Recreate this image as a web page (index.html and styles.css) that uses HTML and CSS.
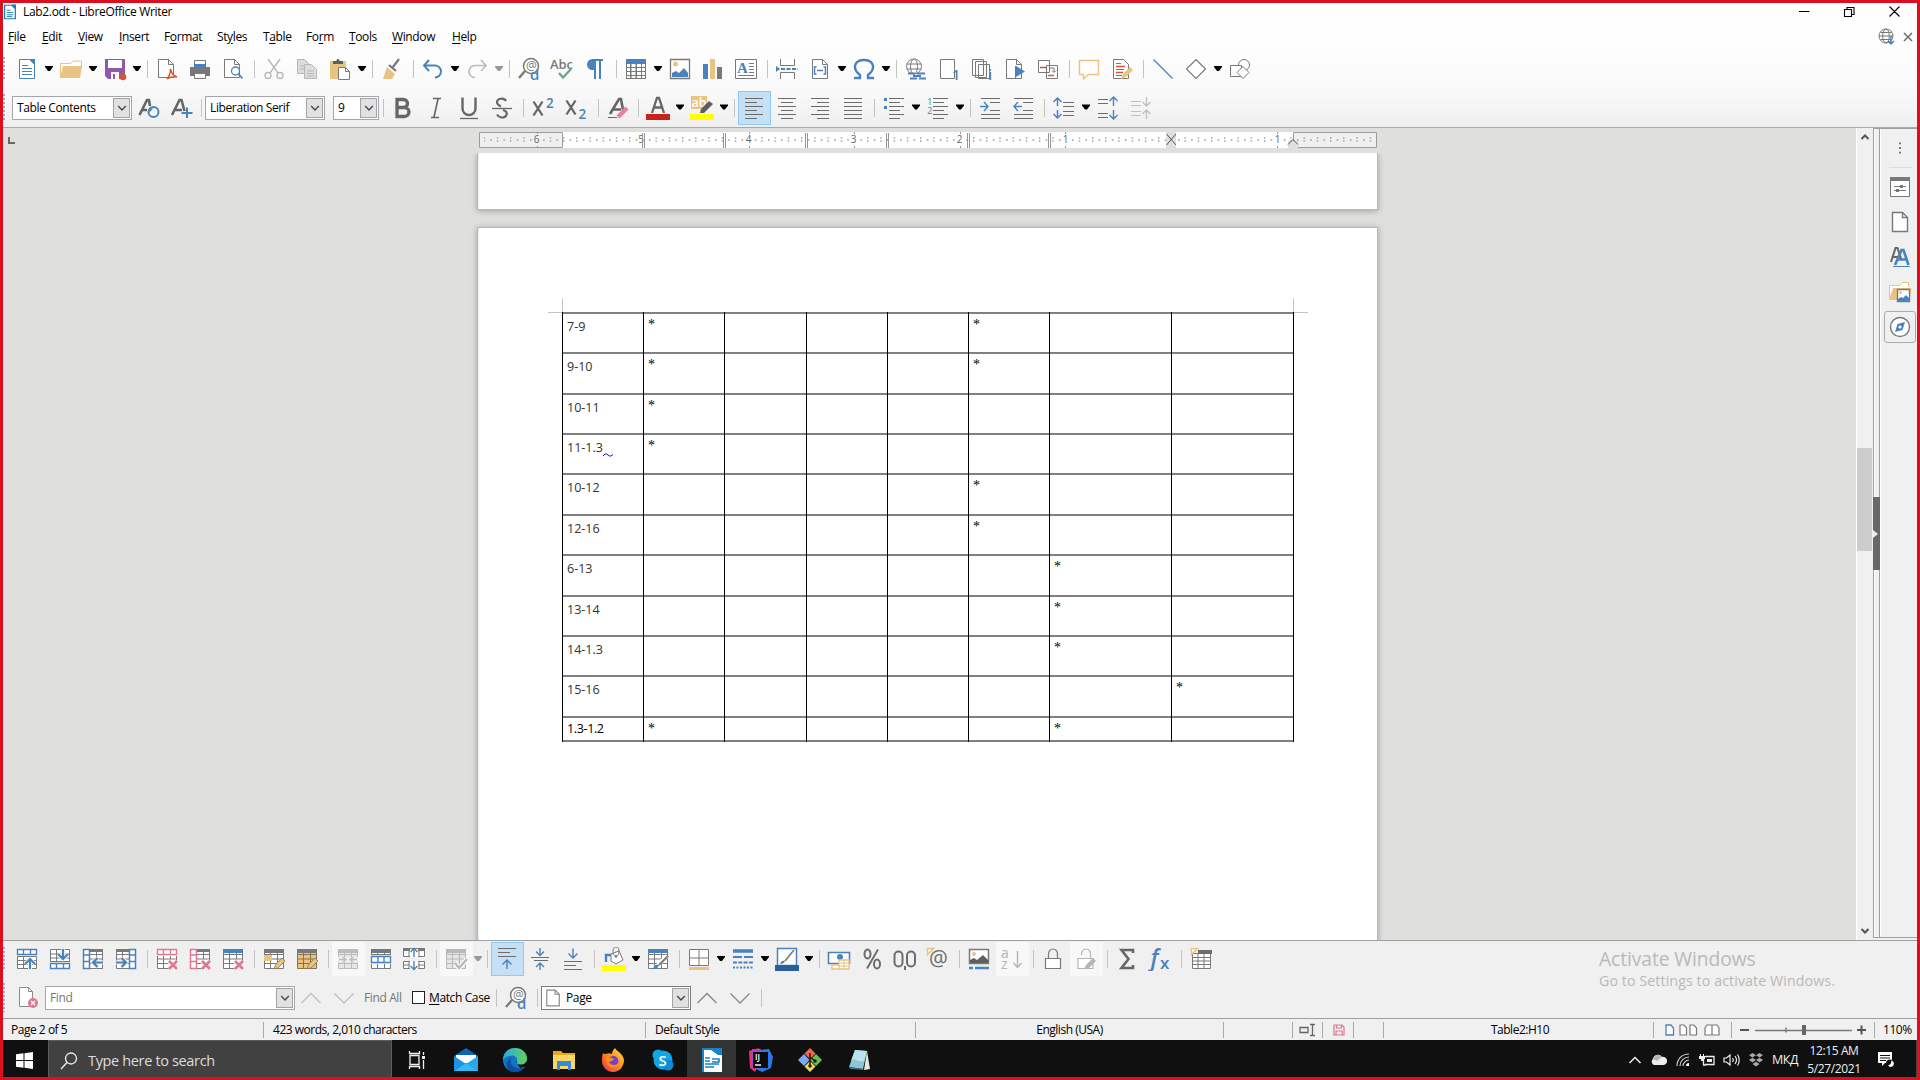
FILE: index.html
```html
<!DOCTYPE html>
<html lang="en">
<head>
<meta charset="utf-8">
<title>Lab2.odt - LibreOffice Writer</title>
<link rel="stylesheet" href="styles.css">
</head>
<body>
<svg class="defs" aria-hidden="true">
<symbol id="doc" viewBox="0 0 24 24"><path d="M4.500 2.500h10l5 5v14h-15z" fill="#fff" stroke="#4a82bd"/><path d="M14 2h6v6z" fill="#4a82bd"/><path d="M7 8.500h6M7 11.500h10M7 14.500h10M7 17.500h10" stroke="#4a82bd" fill="none"/></symbol>
<symbol id="open" viewBox="0 0 24 24"><path d="M1.500 20V6.500h10l3-2.500h8v5" fill="#fff" stroke="#eac282"/><path d="M4 9h19l-2 12H1z" fill="#eac282"/></symbol>
<symbol id="save" viewBox="0 0 24 24"><path d="M2 2h20v20H5l-3-3z" fill="#8e5aaf"/><path d="M5 3h14v8H5zM8 15h8v7H8z" fill="#fff"/><path d="M10 17h2v5h-2z" fill="#8e5aaf"/><circle cx="20" cy="20" r="3.300" fill="#d65532"/></symbol>
<symbol id="pdf" viewBox="0 0 24 24"><path d="M3.500 2.500h10l5 5v13h-15z" fill="#fff" stroke="#797979"/><path d="M13.500 2.500v5h5" fill="none" stroke="#797979"/><path d="M12 22c2.500-3 3.500-6 3.500-10 1 4 3 7 6.500 8-4-.5-7 0-10 2z" fill="#fff" stroke="#d65532" stroke-width="1.500"/></symbol>
<symbol id="print" viewBox="0 0 24 24"><path d="M6.500 9V3.500h11V9" fill="#fff" stroke="#797979"/><path d="M2 10h20v9H2z" fill="#797979"/><path d="M6 7h12v4H6z" fill="#4a82bd"/><path d="M6.500 16.500h11v5h-11z" fill="#fff" stroke="#797979"/></symbol>
<symbol id="preview" viewBox="0 0 24 24"><path d="M3.500 2.500h10l5 5v13h-15z" fill="#fff" stroke="#797979"/><path d="M13.500 2.500v5h5" fill="none" stroke="#797979"/><circle cx="14.500" cy="14" r="4" fill="#fff" stroke="#4a82bd" stroke-width="1.300"/><path d="M17.500 17l4 4.500" stroke="#4a82bd" stroke-width="1.800"/></symbol>
<symbol id="cut" viewBox="0 0 24 24"><g fill="none" stroke="#b9b9b9" stroke-width="1.400"><path d="M6 2l10 14M18 2L8 16"/><circle cx="6" cy="18.500" r="3"/><circle cx="18" cy="18.500" r="3"/></g></symbol>
<symbol id="copy" viewBox="0 0 24 24"><g fill="#ddd" stroke="#b5b5b5"><path d="M2.500 2.500h7l4 4v10h-11z"/><path d="M9.500 7.500h7l5 5v9h-12z"/><path d="M12 14h7M12 16.500h7M12 19h7M5 9h4M5 12h4"/></g></symbol>
<symbol id="paste" viewBox="0 0 24 24"><path d="M2 4h16v18H2z" fill="#eac282"/><path d="M5 4h3l2-2.500L12 4h3v3H5z" fill="#5f5f5f"/><path d="M10.500 10.500h7l4 4v8h-11z" fill="#fff" stroke="#797979"/><path d="M17.500 10.500v4h4" fill="none" stroke="#797979"/></symbol>
<symbol id="brush" viewBox="0 0 24 24"><path d="M7 10l8 7-3 5H3z" fill="#eac282"/><path d="M9 8l7 6M13 10l6-8" stroke="#797979" stroke-width="2.200"/></symbol>
<symbol id="undo" viewBox="0 0 24 24"><path d="M8 3L3 8.500 8 14M3 8.500h11a5.500 5.500 0 0 1 0 12" fill="none" stroke="#4a82bd" stroke-width="1.900"/></symbol>
<symbol id="redo" viewBox="0 0 24 24"><path d="M16 3l5 5.500-5 5.500M21 8.500H10a5.500 5.500 0 0 0 0 12" fill="none" stroke="#bcbcbc" stroke-width="1.700"/></symbol>
<symbol id="find" viewBox="0 0 24 24"><circle cx="14" cy="9" r="7.500" fill="#fff" stroke="#797979" stroke-width="1.500"/><path d="M8 14l-6 7" stroke="#797979" stroke-width="2.300"/><text x="9" y="12.500" class="g" font-size="12" fill="#797979">@</text><text x="13" y="22.500" class="gb" font-size="15" fill="#4a82bd">d</text></symbol>
<symbol id="spell" viewBox="0 0 24 24"><text x="0" y="11.500" class="gb" font-size="12.500" textLength="23" lengthAdjust="spacingAndGlyphs" fill="#797979">Abc</text><path d="M9 16l4 4.500 8-8.500" fill="none" stroke="#69a68c" stroke-width="2.300"/></symbol>
<symbol id="pilcrow" viewBox="0 0 24 24"><path d="M20 2H9.500a5.500 5.500 0 0 0 0 11H11v9h2V4h3v18h2V4h2z" fill="#4a82bd"/></symbol>
<symbol id="table" viewBox="0 0 24 24"><path d="M2 2h20v20H2z" fill="#797979"/><path d="M3 7h3v3H3zM7.500 7h4v3h-4zM13 7h4v3h-4zM18 7h3v3h-3zM3 11h3v3H3zM7.500 11h4v3h-4zM13 11h4v3h-4zM18 11h3v3h-3zM3 15h3v3H3zM7.500 15h4v3h-4zM13 15h4v3h-4zM18 15h3v3h-3zM3 19h3v2H3zM7.500 19h4v2h-4zM13 19h4v2h-4zM18 19h3v2h-3z" fill="#fff"/><path d="M2 2h20v4H2z" fill="#4a82bd"/></symbol>
<symbol id="image" viewBox="0 0 24 24"><path d="M2.500 2.500h19v19h-19z" fill="#fff" stroke="#797979" stroke-width="1.300"/><circle cx="7.500" cy="7" r="2.500" fill="#eac282"/><path d="M4 20v-4l4-2 3 2 5-5 4 5v4z" fill="#4a82bd"/></symbol>
<symbol id="chart" viewBox="0 0 24 24"><path d="M2 7h5v15H2z" fill="#4a82bd"/><path d="M9 2h5v20H9z" fill="#eac282"/><path d="M16 10h5v12h-5z" fill="#797979"/></symbol>
<symbol id="textbox" viewBox="0 0 24 24"><path d="M1.500 2.500h21v19h-21z" fill="#fff" stroke="#797979"/><text x="3" y="15.500" class="gs" font-size="15" fill="#4a82bd">A</text><path d="M15 6.500h5M15 9.500h5M15 12.500h5M15 15.500h5M4 18.500h16" stroke="#797979"/></symbol>
<symbol id="break" viewBox="0 0 24 24"><path d="M5.500 2v6.500h14V2M5.500 22v-6.500h14V22" fill="#fff" stroke="#797979"/><path d="M6 12h17" stroke="#4a82bd" stroke-width="2" stroke-dasharray="4 1.500"/><path d="M1 9l4 3-4 3z" fill="#4a82bd"/></symbol>
<symbol id="field" viewBox="0 0 24 24"><path d="M4.500 2.500h10l5 5v14h-15z" fill="#fff" stroke="#797979"/><path d="M14.500 2.500v5h5" fill="none" stroke="#797979"/><path d="M8.500 10h-2v7h2M15.500 10h2v7h-2M9 13.500h6" fill="none" stroke="#4a82bd" stroke-width="1.500"/></symbol>
<symbol id="omega" viewBox="0 0 24 24"><path d="M2 21h6v-3C-1 11 3 3 12 3s13 8 4 15v3h6" fill="none" stroke="#4a82bd" stroke-width="2.400"/></symbol>
<symbol id="link" viewBox="0 0 24 24"><g fill="#fff" stroke="#797979"><circle cx="10" cy="9.500" r="7.500"/><ellipse cx="10" cy="9.500" rx="3.500" ry="7.500"/><path d="M3 7h14M3 12h14"/></g><path d="M4 16.500h7M13 16.500h8M6 21.500h7M15 21.500h7M9 19h8" stroke="#4a82bd" stroke-width="2.200"/></symbol>
<symbol id="footnote" viewBox="0 0 24 24"><path d="M3.500 2.500h14v19h-14z" fill="#fff" stroke="#797979"/><text x="15" y="22.500" class="gb" font-size="14" fill="#4a82bd">1</text></symbol>
<symbol id="endnote" viewBox="0 0 24 24"><g fill="#fff" stroke="#797979"><path d="M2.500 2.500h11v16h-11zM5.500 4.500h11v16h-11zM8.500 7.500h11v14h-11z"/></g><text x="18" y="22.500" class="gb" font-size="15" fill="#4a82bd">i</text></symbol>
<symbol id="bookmark" viewBox="0 0 24 24"><path d="M3.500 2.500h10l5 5v14h-15z" fill="#fff" stroke="#797979"/><path d="M13.500 2.500v5h5" fill="none" stroke="#797979"/><path d="M13 9l9 5.500-9 5.500z" fill="#4a82bd"/><path d="M12.500 9v13" stroke="#797979"/></symbol>
<symbol id="cross" viewBox="0 0 24 24"><path d="M2.500 3.500h11v12h-11zM10.500 8.500h11v13h-11z" fill="#fff" stroke="#797979"/><path d="M4 10.500h7M12 18.500h6" stroke="#d65532" stroke-width="1.500"/><path d="M14 11h4v4m-2-1.500l2 2 2-2" fill="none" stroke="#797979"/></symbol>
<symbol id="comment" viewBox="0 0 24 24"><path d="M2.500 3.500h19v14h-10l-5 4.500v-4.500h-4z" fill="#fff" stroke="#eac282" stroke-width="1.400"/></symbol>
<symbol id="track" viewBox="0 0 24 24"><path d="M3.500 2.500h10l5 5v14h-15z" fill="#fff" stroke="#797979"/><path d="M6 6.500h5M6 12.500h8M6 18.500h6" stroke="#797979"/><path d="M6 9.500h9M6 15.500h7" stroke="#d65532" stroke-width="1.400"/><path d="M11 22l2-5 7-7 3 3-7 7z" fill="#eac282"/></symbol>
<symbol id="line" viewBox="0 0 24 24"><path d="M2.500 2.500l19 19" stroke="#4a82bd" stroke-width="1.200"/></symbol>
<symbol id="diamond" viewBox="0 0 24 24"><path d="M12 2.500l9.500 9.500-9.500 9.500L2.500 12z" fill="#fff" stroke="#797979" stroke-width="1.200"/></symbol>
<symbol id="shapes" viewBox="0 0 24 24"><circle cx="16" cy="8" r="5.500" fill="#fff" stroke="#797979"/><path d="M2.500 8.500h11v11h-11z" fill="#fff" stroke="#797979"/><path d="M15 9.500l6 6-6 6-6-6z" fill="#fff" stroke="#797979"/></symbol>
<symbol id="stup" viewBox="0 0 24 24"><path d="M2.500 19L10 4h2l1 6M5 14h5" fill="none" stroke="#666" stroke-width="2.600"/><circle cx="16.500" cy="16" r="5" fill="none" stroke="#4a82bd" stroke-width="2"/><path d="M12 12l4 .5-3.500 4z" fill="#4a82bd"/></symbol>
<symbol id="stnew" viewBox="0 0 24 24"><path d="M2 19L9.500 4h2l3 11M5 14h7" fill="none" stroke="#666" stroke-width="2.600"/><path d="M17 11.500v10.500M11.500 17h11" stroke="#4a82bd" stroke-width="2"/></symbol>
<symbol id="bold" viewBox="0 0 24 24"><path d="M6 3.500h6.500a4 4 0 0 1 0 8H6zM6 11.500h7.500a4.200 4.200 0 0 1 0 9H6z" fill="none" stroke="#666" stroke-width="3.300"/></symbol>
<symbol id="ital" viewBox="0 0 24 24"><path d="M9 2.500h8M7 21.500h8M14 3l-4 18" fill="none" stroke="#666" stroke-width="1.600"/></symbol>
<symbol id="under" viewBox="0 0 24 24"><path d="M5.500 1.500v11a6.500 6.500 0 0 0 13 0v-11" fill="none" stroke="#666" stroke-width="2.400"/><path d="M3 22.500h18" stroke="#666" stroke-width="1.300"/></symbol>
<symbol id="strike" viewBox="0 0 24 24"><path d="M16 5C14 1.500 7 2 7 6.500c0 2 2 3 4 4M13 14c7 2 3 8-1 7.500-3 0-4-1.500-5-3" fill="none" stroke="#666" stroke-width="2.200"/><path d="M2 12.500h20" stroke="#666" stroke-width="1.300"/></symbol>
<symbol id="sup" viewBox="0 0 24 24"><path d="M2.500 5.500l9 14M11.500 5.500l-9 14" stroke="#666" stroke-width="2.300"/><text x="15" y="12" class="gb" font-size="13.500" fill="#4a82bd">2</text></symbol>
<symbol id="sub" viewBox="0 0 24 24"><path d="M2.500 4.500l9 14M11.500 4.500l-9 14" stroke="#666" stroke-width="2.300"/><text x="14.500" y="23" class="gb" font-size="13.500" fill="#4a82bd">2</text></symbol>
<symbol id="clear" viewBox="0 0 24 24"><path d="M4 18l9-15h2l2 11M7 13.500h8" fill="none" stroke="#666" stroke-width="2.600"/><path d="M2 21.500h9" stroke="#666"/><path d="M12 21l9-9" stroke="#e8829b" stroke-width="4.500"/></symbol>
<symbol id="fcol" viewBox="0 0 24 24"><path d="M6 17l5-15h2l5 15M8 11.500h8" fill="none" stroke="#666" stroke-width="2.300"/><path d="M0 18h24v6H0z" fill="#c9211e"/></symbol>
<symbol id="hl" viewBox="0 0 24 24"><path d="M1 0h16v13H1z" fill="#eac282"/><text x="1.500" y="11" class="gb" font-size="12.500" fill="#fff">ab</text><path d="M10 17l1-4 8-8 4 3-9 9z" fill="#5f5f5f"/><path d="M0 18h24v6H0z" fill="#ff0"/></symbol>
<symbol id="al" viewBox="0 0 24 24"><path d="M3 2.500h18M3 6.500h12M3 10.500h18M3 14.500h12M3 18.500h18M3 22.500h12" stroke="#6c6c6c" stroke-width="1.200"/></symbol>
<symbol id="ac" viewBox="0 0 24 24"><path d="M3 2.500h18M6 6.500h12M3 10.500h18M6 14.500h12M3 18.500h18M6 22.500h12" stroke="#6c6c6c" stroke-width="1.200"/></symbol>
<symbol id="ar" viewBox="0 0 24 24"><path d="M3 2.500h18M9 6.500h12M3 10.500h18M9 14.500h12M3 18.500h18M9 22.500h12" stroke="#6c6c6c" stroke-width="1.200"/></symbol>
<symbol id="aj" viewBox="0 0 24 24"><path d="M3 2.500h18M3 6.500h18M3 10.500h18M3 14.500h18M3 18.500h18M3 22.500h18" stroke="#6c6c6c" stroke-width="1.200"/></symbol>
<symbol id="bul" viewBox="0 0 24 24"><path d="M7 2.500h15M7 6.500h11M7 10.500h15M7 14.500h11M7 18.500h15M7 22.500h11" stroke="#6c6c6c" stroke-width="1.200"/><path d="M2 2h3v3H2zM2 10h3v3H2z" fill="#4a82bd"/></symbol>
<symbol id="num" viewBox="0 0 24 24"><path d="M7 2.500h15M7 6.500h11M7 10.500h15M7 14.500h11M7 18.500h15M7 22.500h11" stroke="#6c6c6c" stroke-width="1.200"/><text x="1" y="9" class="g" font-size="9.500" fill="#4a82bd">1</text><text x="1" y="18" class="g" font-size="9.500" fill="#4a82bd">2</text></symbol>
<symbol id="ind" viewBox="0 0 24 24"><path d="M3 2.500h19M12 6.500h10M12 14.500h10M3 18.500h19M3 22.500h19" stroke="#6c6c6c" stroke-width="1.200"/><path d="M2 10.500h8M6 6l4 4.500-4 4.500" fill="none" stroke="#4a82bd" stroke-width="1.400"/></symbol>
<symbol id="outd" viewBox="0 0 24 24"><path d="M3 2.500h19M12 6.500h10M12 14.500h10M3 18.500h19M3 22.500h19" stroke="#6c6c6c" stroke-width="1.200"/><path d="M3 10.500h8M7 6l-4 4.500 4 4.500" fill="none" stroke="#4a82bd" stroke-width="1.400"/></symbol>
<symbol id="lsp" viewBox="0 0 24 24"><path d="M11 6.500h11M11 10.500h11M11 15.500h11M11 19.500h11" stroke="#6c6c6c" stroke-width="1.200"/><path d="M5.500 2v8M1.500 6l4-4 4 4M5.500 14v8M1.500 18l4 4 4-4" fill="none" stroke="#4a82bd" stroke-width="1.500"/></symbol>
<symbol id="pinc" viewBox="0 0 24 24"><path d="M2 3.500h10M2 7.500h10M2 17.500h10M2 21.500h10" stroke="#6c6c6c" stroke-width="1.200"/><path d="M17.500 1v9M13.500 5l4-4 4 4M17.500 14v9M13.500 19l4 4 4-4" fill="none" stroke="#4a82bd" stroke-width="1.400"/></symbol>
<symbol id="pdec" viewBox="0 0 24 24"><path d="M2 5.500h10M2 9.500h10M2 15.500h10M2 19.500h10" stroke="#c0c0c0" stroke-width="1.200"/><path d="M17.500 1v9M13.500 6l4 4 4-4M17.500 14v9M13.500 18l4-4 4 4" fill="none" stroke="#c0c0c0" stroke-width="1.400"/></symbol>

<symbol id="grid" viewBox="0 0 24 24"><path d="M2.500 2.500h19v19h-19zM2.500 7.500h19M2.500 12h19M2.500 16.500h19M8.500 2.500v19M15.500 2.500v19" fill="#fff" stroke="#797979"/></symbol>
<symbol id="rabove" viewBox="0 0 24 24"><path d="M2.500 9.500h19v12h-19zM2.500 13.500h19M2.500 17.500h19M8.500 9v12M15.500 9v12" fill="#fff" stroke="#797979"/><path d="M2.500 2.500h19v5h-19zM8.500 2.500v5M15.500 2.500v5" fill="#fff" stroke="#4a82bd" stroke-width="1.400"/><path d="M15 12v10M10 17l5-5 5 5" fill="none" stroke="#f0f0f0" stroke-width="4"/><path d="M15 22v-10M10 17l5-5 5 5" fill="none" stroke="#4a82bd" stroke-width="2"/></symbol>
<symbol id="rbelow" viewBox="0 0 24 24"><path d="M2.500 2.500h19v12h-19zM2.500 7h19M2.500 11h19M8.500 2v12M15.500 2v12" fill="#fff" stroke="#797979"/><path d="M2.500 16.500h19v5h-19zM8.500 16.500v5M15.500 16.500v5" fill="#fff" stroke="#4a82bd" stroke-width="1.400"/><path d="M15 2v10M10 7l5 5 5-5" fill="none" stroke="#f0f0f0" stroke-width="4"/><path d="M15 2v10M10 7l5 5 5-5" fill="none" stroke="#4a82bd" stroke-width="2.200"/></symbol>
<symbol id="cbefore" viewBox="0 0 24 24"><use href="#grid"/><path d="M2 2h20v3H2z" fill="#797979"/><path d="M2.500 2.500h6v19h-6zM2.500 8h6M2.500 14.500h6" fill="#fff" stroke="#4a82bd" stroke-width="1.500"/><path d="M22 15.500H12M16.500 11L12 15.500l4.500 4.500" fill="none" stroke="#f0f0f0" stroke-width="4"/><path d="M22 15.500H12M16.500 11L12 15.500l4.500 4.500" fill="none" stroke="#4a82bd" stroke-width="2.200"/></symbol>
<symbol id="cafter" viewBox="0 0 24 24"><use href="#grid"/><path d="M2 2h20v3H2z" fill="#797979"/><path d="M15.500 2.500h6v19h-6zM15.500 8h6M15.500 14.500h6" fill="#fff" stroke="#4a82bd" stroke-width="1.500"/><path d="M2 15.500h10M7.500 11l4.500 4.500L7.500 20" fill="none" stroke="#f0f0f0" stroke-width="4"/><path d="M2 15.500h10M7.500 11l4.500 4.500L7.500 20" fill="none" stroke="#4a82bd" stroke-width="2.200"/></symbol>
<symbol id="x" viewBox="0 0 24 24"><path d="M14 14l8 8M22 14l-8 8" stroke="#fff" stroke-width="5"/><path d="M14 14l8 8M22 14l-8 8" stroke="#e0788f" stroke-width="2.800"/></symbol>
<symbol id="delr" viewBox="0 0 24 24"><use href="#grid"/><path d="M2 2h20v7H2z" fill="#f0f0f0"/><path d="M2.500 2.500h19v5h-19zM8.500 2.500v5M15.500 2.500v5" fill="#fff" stroke="#e0788f" stroke-width="1.400"/><use href="#x"/></symbol>
<symbol id="delc" viewBox="0 0 24 24"><use href="#grid"/><path d="M2 2h20v3H2z" fill="#797979"/><path d="M2.500 2.500h6v19h-6zM2.500 8h6M2.500 14.500h6" fill="#fff" stroke="#e0788f" stroke-width="1.500"/><use href="#x"/></symbol>
<symbol id="delt" viewBox="0 0 24 24"><use href="#grid"/><path d="M2 2h20v4H2z" fill="#4a82bd"/><use href="#x"/></symbol>
<symbol id="pen" viewBox="0 0 24 24"><path d="M12 22l2-5 6-6 3 3-7 7z" fill="#eac282" stroke="#8a7350" stroke-width=".8"/></symbol>
<symbol id="selc" viewBox="0 0 24 24"><use href="#grid"/><path d="M2 2h20v4H2z" fill="#797979"/><path d="M2 8h8v6H2z" fill="#eac282"/><use href="#pen"/></symbol>
<symbol id="selt" viewBox="0 0 24 24"><path d="M2.500 2.500h19v19h-19zM2.500 7.500h19M2.500 12h19M2.500 16.500h19M8.500 2.500v19M15.500 2.500v19" fill="#eac282" stroke="#8a7350"/><path d="M2 2h20v4H2z" fill="#797979"/><use href="#pen"/></symbol>
<symbol id="merge" viewBox="0 0 24 24"><path d="M2.500 2.500h19v19h-19zM2.500 7.500h19M2.500 16.500h19M8.500 2.500v19M15.500 2.500v19" fill="#e6e6e6" stroke="#bcbcbc"/><path d="M2 2h20v4H2z" fill="#bcbcbc"/><path d="M2 10h20v5H2z" fill="#eee"/><path d="M3 12.500h7M7 10l3 2.500L7 15M21 12.500h-7m3-2.500l-3 2.500 3 2.500" fill="none" stroke="#bcbcbc" stroke-width="1.300"/></symbol>
<symbol id="split" viewBox="0 0 24 24"><use href="#grid"/><path d="M2 2h20v4H2z" fill="#797979"/><path d="M1 8h22v9H1z" fill="#f0f0f0"/><path d="M2.500 9.500h19v6h-19zM9 9.500v6M15 9.500v6" fill="#fff" stroke="#4a82bd" stroke-width="1.400"/></symbol>
<symbol id="splitt" viewBox="0 0 24 24"><path d="M1.500 2.500h21v7h-21zM1.500 14.500h21v7h-21zM1.500 18h21M7 2v7M17 2v7M7 15v7M17 15v7" fill="#fff" stroke="#797979"/><path d="M1 1h22v3H1z" fill="#797979"/><path d="M8 2h8v8H8zM8 14h8v9H8z" fill="#fff"/><path d="M12 1v9M8.500 5L12 1.500 15.500 5M12 14v9M8.500 19l3.500 3.500 3.500-3.500" fill="none" stroke="#4a82bd" stroke-width="1.400"/></symbol>
<symbol id="prot" viewBox="0 0 24 24"><path d="M2.500 2.500h19v19h-19zM2.500 7.500h19M2.500 12h19M2.500 16.500h19M8.500 2.500v19M15.500 2.500v19" fill="#e6e6e6" stroke="#b8b8b8"/><path d="M2 2h20v4H2z" fill="#b8b8b8"/><path d="M11 16l4 5 8-9" fill="none" stroke="#fff" stroke-width="4.500"/><path d="M11 16l4 5 8-9" fill="none" stroke="#b8b8b8" stroke-width="2.400"/></symbol>
<symbol id="vtop" viewBox="0 0 24 24"><path d="M3 1.500h18M3 5.500h12M3 9.500h18" stroke="#6c6c6c" stroke-width="1.200"/><path d="M12 22V13M7.500 17.500L12 13l4.500 4.500" fill="none" stroke="#4a82bd" stroke-width="1.400"/></symbol>
<symbol id="vmid" viewBox="0 0 24 24"><path d="M3 10.500h18M6 13.500h14" stroke="#6c6c6c" stroke-width="1.200"/><path d="M12 1v7M8 4.500l4 4 4-4M12 23v-7M8 20l4-4 4 4" fill="none" stroke="#4a82bd" stroke-width="1.400"/></symbol>
<symbol id="vbot" viewBox="0 0 24 24"><path d="M3 14.500h18M3 18.500h12M3 22.500h18" stroke="#6c6c6c" stroke-width="1.200"/><path d="M12 1.500V11M7.500 6.500L12 11l4.500-4.500" fill="none" stroke="#4a82bd" stroke-width="1.400"/></symbol>
<symbol id="fill" viewBox="0 0 24 24"><path d="M4 15V8h5" fill="none" stroke="#4a82bd" stroke-width="2.400"/><path d="M9 7l8-3 4 9-7 4-5-3z" fill="#fff" stroke="#797979"/><ellipse cx="14" cy="4.500" rx="3" ry="4.500" fill="none" stroke="#797979"/><circle cx="14" cy="9.500" r="1.200" fill="#797979"/><path d="M0 18h24v6H0z" fill="#ff0"/></symbol>
<symbol id="autof" viewBox="0 0 24 24"><use href="#grid"/><path d="M2 2h20v4H2z" fill="#4a82bd"/><path d="M21 9l-9 9" stroke="#fff" stroke-width="4"/><path d="M22 9l-9 9" stroke="#797979" stroke-width="2"/><path d="M7 22c1-4 3-5 6-4-1 3-3 4-6 4z" fill="#4a82bd"/></symbol>
<symbol id="bord" viewBox="0 0 24 24"><path d="M2.500 2.500h19v16h-19zM12 2.500v16M2.500 11h19" fill="#fff" stroke="#797979"/><path d="M2 20h20v3H2z" fill="#eac282"/></symbol>
<symbol id="bsty" viewBox="0 0 24 24"><path d="M2 4h20" stroke="#4a82bd" stroke-width="3.500"/><path d="M2 10h20" stroke="#4a82bd" stroke-width="2" stroke-dasharray="9 2"/><path d="M2 15.500h20" stroke="#4a82bd" stroke-width="2" stroke-dasharray="4 1.300"/><path d="M2 20.500h20" stroke="#4a82bd" stroke-width="2" stroke-dasharray="2 1.500"/></symbol>
<symbol id="bcol" viewBox="0 0 24 24"><path d="M2.500 1.500h19v17h-19z" fill="#fff" stroke="#4a82bd" stroke-width="1.500"/><path d="M19 3l-9 11" stroke="#797979" stroke-width="1.600"/><path d="M5 17c1-3 3-4 5-3-1 2-2 3-5 3z" fill="#4a82bd"/><path d="M0 18h24v6H0z" fill="#2a5f9e"/></symbol>
<symbol id="cur" viewBox="0 0 24 24"><path d="M1.500 5.500h21v11h-21z" fill="#fff" stroke="#4a82bd" stroke-width="1.600"/><circle cx="13" cy="10" r="3" fill="#4a82bd"/><path d="M12 13h10v9h-10zM5 18h7v4H5z" fill="#fff" stroke="#eac282" stroke-width="1.300"/><path d="M12 16h10M12 19h10M17 13v9" stroke="#eac282"/></symbol>
<symbol id="pct" viewBox="0 0 24 24"><path d="M18 2.500L7 21.500" stroke="#6c6c6c" stroke-width="1.900"/><ellipse cx="7.500" cy="7" rx="3" ry="4.500" fill="none" stroke="#6c6c6c" stroke-width="2"/><ellipse cx="17" cy="17" rx="3" ry="4.500" fill="none" stroke="#6c6c6c" stroke-width="2"/></symbol>
<symbol id="dec" viewBox="0 0 24 24"><rect x="1.500" y="4.500" width="8" height="15" rx="4" fill="none" stroke="#6c6c6c" stroke-width="2"/><rect x="14" y="4.500" width="8" height="15" rx="4" fill="none" stroke="#6c6c6c" stroke-width="2"/><path d="M12 19v4" stroke="#6c6c6c" stroke-width="2"/></symbol>
<symbol id="at" viewBox="0 0 24 24"><text x="3" y="19" class="g" font-size="21" fill="#6c6c6c">@</text><path d="M1.500 1.500h6l-6 6z" fill="#fff" stroke="#eac282" stroke-width="1.500"/></symbol>
<symbol id="img2" viewBox="0 0 24 24"><path d="M2.500 2.500h19v14h-19z" fill="#fff" stroke="#797979" stroke-width="1.500"/><circle cx="7" cy="7" r="2" fill="#eac282"/><path d="M3 16v-3l4-2 3 2 6-5 5 5v3z" fill="#5f5f5f"/><path d="M2 21h4M8 21h14" stroke="#4a82bd" stroke-width="2.400"/></symbol>
<symbol id="sort" viewBox="0 0 24 24"><text x="1" y="10.500" class="g" font-size="14" fill="#b5b5b5">a</text><text x="1" y="22" class="g" font-size="14" fill="#b5b5b5">z</text><path d="M17.500 4v16M13.500 16l4 4.500 4-4.500" fill="none" stroke="#b5b5b5" stroke-width="1.400"/></symbol>
<symbol id="lock" viewBox="0 0 24 24"><path d="M7.500 11V7a4.500 5 0 0 1 9 0v4" fill="none" stroke="#797979" stroke-width="1.200"/><path d="M4.500 11.500h15v10h-15z" fill="#fff" stroke="#797979" stroke-width="1.200"/></symbol>
<symbol id="unlock" viewBox="0 0 24 24"><path d="M7.500 8V7a4.500 5 0 0 1 9 0v4" fill="none" stroke="#b5b5b5" stroke-width="1.200"/><path d="M4 11.500h15v10H4z" fill="#fff" stroke="#b5b5b5" stroke-width="1.200"/><path d="M10 22l2-4 7-7 3 3-7 7z" fill="#b5b5b5"/></symbol>
<symbol id="sigma" viewBox="0 0 24 24"><path d="M18 6V3H6.500l7 9-7 9H18v-3" fill="none" stroke="#666" stroke-width="2.600"/></symbol>
<symbol id="fx" viewBox="0 0 24 24"><text x="2.500" y="19" class="gsi" font-size="23" fill="#4a82bd">f</text><text x="12" y="22" class="gb" font-size="17" fill="#4a82bd">x</text></symbol>
<symbol id="tprop" viewBox="0 0 24 24"><path d="M3.500 6.500h18v15h-18zM3.500 10.500h18M3.500 14h18M3.500 17.500h18M9 6.500v15M15 6.500v15" fill="#fff" stroke="#797979"/><path d="M9 3h14v4H9z" fill="#6c6c6c"/><path d="M2.500 1.500h6l-6 6z" fill="#fff" stroke="#eac282" stroke-width="1.500"/></symbol>
<symbol id="closef" viewBox="0 0 24 24"><path d="M3.500 1.500h9l4 4v15h-13z" fill="#fff" stroke="#8a8a8a"/><path d="M12.500 1.500v4h4" fill="none" stroke="#8a8a8a"/><circle cx="17" cy="17" r="5" fill="#e0788f"/><path d="M15 15l4 4M19 15l-4 4" stroke="#fff" stroke-width="1.300"/></symbol>
<symbol id="up" viewBox="0 0 24 24"><path d="M2.500 17L12 7.500l9.500 9.500" fill="none" stroke="currentColor" stroke-width="1.300"/></symbol>
<symbol id="down" viewBox="0 0 24 24"><path d="M2.500 7.500L12 17l9.500-9.500" fill="none" stroke="currentColor" stroke-width="1.300"/></symbol>
<symbol id="pg" viewBox="0 0 24 24"><path d="M4.500 2.500h10l5 5v14h-15z" fill="#fff" stroke="currentColor" stroke-width="1.400"/><path d="M14.500 2.500v5h5" fill="none" stroke="currentColor" stroke-width="1.400"/></symbol>
<symbol id="chev" viewBox="0 0 10 10"><path d="M1.200 3L5 7l3.800-4" fill="none" stroke="#444" stroke-width="1.300"/></symbol>
<symbol id="globe" viewBox="0 0 18 18"><g fill="none" stroke="#797979"><circle cx="8" cy="8" r="7"/><ellipse cx="8" cy="8" rx="3.300" ry="7"/><path d="M1 8h14M2.500 4.500h11M2.500 11.500h11"/></g><path d="M13 8v8M10 13l3 3 3-3" fill="none" stroke="#4a82bd" stroke-width="1.500"/></symbol>
<symbol id="props" viewBox="0 0 24 24"><path d="M2.500 2.500h19v19h-19z" fill="#fff" stroke="#797979"/><path d="M2 2h20v4H2z" fill="#797979"/><path d="M6 11.500h12M6 15.500h12" stroke="#797979"/><path d="M12 10h3v3h-3zM8 14h3v3H8z" fill="#6b7b8c"/></symbol>
<symbol id="styles" viewBox="0 0 24 24"><path d="M3 17L7.500 3h2l4 12M5 12h7" fill="none" stroke="#666" stroke-width="2"/><path d="M7 20l6.500-15h2l5 15M10 14.500h8" fill="none" stroke="#4a82bd" stroke-width="2.600"/><path d="M5 21.500h17" stroke="#4a82bd"/></symbol>
<symbol id="gallery" viewBox="0 0 24 24"><path d="M1.500 18V5.500h10l3-3h6v4" fill="#fff" stroke="#eac282"/><path d="M5 8h18.500l-2 12H1z" fill="#eac282"/><path d="M9.500 9.500h12v12h-12z" fill="#fff" stroke="#797979" stroke-width="1.400"/><circle cx="12.500" cy="12.500" r="1.500" fill="#eac282"/><path d="M10 21v-2l3-2 2 1 3-3 3 3v3z" fill="#4a82bd"/></symbol>
<symbol id="nav" viewBox="0 0 24 24"><circle cx="12" cy="12" r="9.500" fill="#fff" stroke="#797979" stroke-width="1.400"/><path d="M17 7l-2.500 8L7 17l2.500-8z" fill="#4a82bd"/><circle cx="12" cy="12" r="1.600" fill="#fff"/></symbol>
</svg>

<div class="screen">
  <header class="head">
    <div class="title">
      <svg class="app" viewBox="0 0 13 16"><path d="M.7.700h8l3.600 4v10.600H.7z" fill="#fff" stroke="#1a7aae" stroke-width="1.300"/><path d="M8 0h5v5z" fill="#1a7aae"/><path d="M3 6h4M3 8.500h7M3 11h7M3 13h6" stroke="#1a7aae"/></svg>
      <span>Lab2.odt - LibreOffice Writer</span>
      <svg class="win" viewBox="0 0 120 16"><path d="M9 7.500h10.500M54.500 5.500h7v7h-7zM57 5V3.500h7v7h-2.500M99.500 2.500l10 10M109.500 2.500l-10 10" fill="none" stroke="#000" stroke-width="1.100"/></svg>
    </div>
    <nav class="menu">
      <span style="width:34px"><u>F</u>ile</span><span style="width:36px"><u>E</u>dit</span><span style="width:41px"><u>V</u>iew</span><span style="width:45px"><u>I</u>nsert</span><span style="width:53px">F<u>o</u>rmat</span><span style="width:46px">St<u>y</u>les</span><span style="width:43px">T<u>a</u>ble</span><span style="width:43px">Fo<u>r</u>m</span><span style="width:43px"><u>T</u>ools</span><span style="width:60px"><u>W</u>indow</span><span><u>H</u>elp</span>
      <svg class="gl"><use href="#globe"/></svg>
      <svg class="mx" viewBox="0 0 10 10"><path d="M1 1l8 8M9 1l-8 8" stroke="#6c6c6c" stroke-width="1.500"/></svg>
    </nav>
    <div class="bar b1">
      <i class="grip"></i>
      <div class="g0" style="width:136px"><svg><use href="#doc"/></svg><i class="dd"></i><svg><use href="#open"/></svg><i class="dd"></i><svg><use href="#save"/></svg><i class="dd"></i></div>
      <div class="gr" style="width:107px"><svg><use href="#pdf"/></svg><svg><use href="#print"/></svg><svg><use href="#preview"/></svg></div>
      <div class="gr" style="width:118px"><svg><use href="#cut"/></svg><svg><use href="#copy"/></svg><svg><use href="#paste"/></svg><i class="dd"></i></div>
      <div class="gr" style="width:41px"><svg><use href="#brush"/></svg></div>
      <div class="gr" style="width:96px"><svg><use href="#undo"/></svg><i class="dd"></i><svg><use href="#redo"/></svg><i class="dd off"></i></div>
      <div class="gr" style="width:107px"><svg><use href="#find"/></svg><svg><use href="#spell"/></svg><svg><use href="#pilcrow"/></svg></div>
      <div class="gr" style="width:151px"><svg><use href="#table"/></svg><i class="dd"></i><svg><use href="#image"/></svg><svg><use href="#chart"/></svg><svg><use href="#textbox"/></svg></div>
      <div class="gr" style="width:129px"><svg><use href="#break"/></svg><svg><use href="#field"/></svg><i class="dd"></i><svg><use href="#omega"/></svg><i class="dd"></i></div>
      <div class="gr" style="width:173px"><svg><use href="#link"/></svg><svg><use href="#footnote"/></svg><svg><use href="#endnote"/></svg><svg><use href="#bookmark"/></svg><svg><use href="#cross"/></svg></div>
      <div class="gr" style="width:74px"><svg><use href="#comment"/></svg><svg><use href="#track"/></svg></div>
      <div class="gr"><svg><use href="#line"/></svg><svg><use href="#diamond"/></svg><i class="dd"></i><svg><use href="#shapes"/></svg></div>
    </div>
    <div class="bar b2">
      <i class="grip"></i>
      <div class="g0" style="width:190px"><div class="combo" style="width:120px;margin-left:1px"><span>Table Contents</span><b><svg><use href="#chev"/></svg></b></div><svg class="n1"><use href="#stup"/></svg><svg><use href="#stnew"/></svg></div>
      <div class="gr" style="width:182px"><div class="combo" style="width:120px"><span>Liberation Serif</span><b><svg><use href="#chev"/></svg></b></div><div class="combo c3" style="width:46px"><span>9</span><b><svg><use href="#chev"/></svg></b></div></div>
      <div class="gr" style="width:140px"><svg><use href="#bold"/></svg><svg><use href="#ital"/></svg><svg><use href="#under"/></svg><svg><use href="#strike"/></svg></div>
      <div class="gr" style="width:75px"><svg><use href="#sup"/></svg><svg><use href="#sub"/></svg></div>
      <div class="gr" style="width:40px"><svg><use href="#clear"/></svg></div>
      <div class="gr" style="width:96px"><svg><use href="#fcol"/></svg><i class="dd"></i><svg><use href="#hl"/></svg><i class="dd"></i></div>
      <div class="gr" style="width:140px"><svg class="on"><use href="#al"/></svg><svg><use href="#ac"/></svg><svg><use href="#ar"/></svg><svg><use href="#aj"/></svg></div>
      <div class="gr" style="width:96px"><svg><use href="#bul"/></svg><i class="dd"></i><svg><use href="#num"/></svg><i class="dd"></i></div>
      <div class="gr" style="width:74px"><svg><use href="#ind"/></svg><svg><use href="#outd"/></svg></div>
      <div class="gr"><svg><use href="#lsp"/></svg><i class="dd"></i><svg><use href="#pinc"/></svg><svg><use href="#pdec"/></svg></div>
    </div>
  </header>

  <main class="work">
    <section class="doc">
      <div class="rrow">
        <svg class="tab" viewBox="0 0 7 7"><path d="M1 0v6h6" fill="none" stroke="#666" stroke-width="2"/></svg>
        <svg class="ruler" viewBox="479 132 900 16">
          <defs><pattern id="tk" x="529.900" y="132" width="13.225" height="16" patternUnits="userSpaceOnUse"><path d="M.2 7h1.200v2H.2z" fill="#999"/><path d="M6.800 5h1v2h-1zM6.800 8h1v2h-1z" fill="#999"/></pattern></defs>
          <path d="M479 132h898v16H479z" fill="#fff"/>
          <path d="M479.500 132.500h83v15h-83zM1293.500 132.500h83v15h-83z" fill="#f0f0f0" stroke="#9c9c9c"/>
          <path d="M484 132h888v16H484z" fill="url(#tk)"/>
          <g fill="#fff"><path d="M638 134h8v12h-8zM744 134h9v12h-9zM849 134h9v12h-9zM955 134h8v12h-8zM1061 134h9v12h-9zM1274 134h8v12h-8z"/><path fill="#f0f0f0" d="M532 134h9v12h-9z"/></g>
          <g class="rn"><text x="536.500" y="142.500">6</text><text x="641" y="142.500">5</text><text x="748.500" y="142.500">4</text><text x="853.500" y="142.500">3</text><text x="959.500" y="142.500">2</text><text x="1065.500" y="142.500">1</text><text x="1277.500" y="142.500">1</text></g>
          <path d="M537.500 132v2M537.500 146v2M749.500 132v2M749.500 146v2M854.500 132v2M854.500 146v2M960.500 132v2M960.500 146v2M1065.500 132v2M1065.500 146v2M1277.500 132v2M1277.500 146v2" stroke="#999"/>
          <path d="M642.500 133v15M644.500 133v15M723.500 133v15M725.500 133v15M805.500 133v15M807.500 133v15M886.500 133v15M888.500 133v15M967.500 133v15M969.500 133v15M1048.500 133v15M1050.500 133v15" stroke="#969696"/>
          <path d="M1166 132h10v16h-10zM1288 141h10v7h-10z" fill="#dfdfde"/>
          <path d="M1166.500 134l9.500 11M1176 134l-9.500 11M1288 144.500l5-5 5 5" fill="none" stroke="#555"/>
        </svg>
      </div>
      <div class="pages">
        <div class="page p1"></div>
        <div class="page p2">
          <div class="crop"></div>
          <table>
            <colgroup><col style="width:81px"><col style="width:81px"><col style="width:82px"><col style="width:81px"><col style="width:81px"><col style="width:81px"><col style="width:122px"><col style="width:123px"></colgroup>
            <tr style="height:40px"><th>7-9</th><td>*</td><td></td><td></td><td></td><td>*</td><td></td><td></td></tr>
            <tr style="height:41px"><th>9-10</th><td>*</td><td></td><td></td><td></td><td>*</td><td></td><td></td></tr>
            <tr style="height:40px"><th>10-11</th><td>*</td><td></td><td></td><td></td><td></td><td></td><td></td></tr>
            <tr style="height:40px"><th>11-1.3<svg class="wave" viewBox="0 0 10 4"><path d="M0 3l2-2h1.500l3 2H8l2-1.500" fill="none" stroke="#11d"/></svg></th><td>*</td><td></td><td></td><td></td><td></td><td></td><td></td></tr>
            <tr style="height:41px"><th>10-12</th><td></td><td></td><td></td><td></td><td>*</td><td></td><td></td></tr>
            <tr style="height:40px"><th>12-16</th><td></td><td></td><td></td><td></td><td>*</td><td></td><td></td></tr>
            <tr style="height:41px"><th>6-13</th><td></td><td></td><td></td><td></td><td></td><td>*</td><td></td></tr>
            <tr style="height:40px"><th>13-14</th><td></td><td></td><td></td><td></td><td></td><td>*</td><td></td></tr>
            <tr style="height:40px"><th>14-1.3</th><td></td><td></td><td></td><td></td><td></td><td>*</td><td></td></tr>
            <tr style="height:41px"><th>15-16</th><td></td><td></td><td></td><td></td><td></td><td></td><td>*</td></tr>
            <tr class="last" style="height:26px"><th>1.3-1.2</th><td>*</td><td></td><td></td><td></td><td></td><td>*</td><td></td></tr>
          </table>
        </div>
      </div>
    </section>
    <div class="scroll">
      <svg viewBox="0 0 10 8"><path d="M1.500 6L5 2.500 8.500 6" fill="none" stroke="#555" stroke-width="2"/></svg>
      <div class="thumb"></div>
      <svg viewBox="0 0 10 8"><path d="M1.500 2L5 5.500 8.500 2" fill="none" stroke="#555" stroke-width="2"/></svg>
    </div>
    <div class="split"><div class="hide"></div></div>
    <aside class="side">
      <svg class="dots" viewBox="0 0 24 24"><path d="M11 6h2v2h-2zM11 11h2v2h-2zM11 16h2v2h-2z" fill="#6c6c6c"/></svg>
      <hr>
      <svg><use href="#props"/></svg><svg class="pgi"><use href="#pg"/></svg><svg><use href="#styles"/></svg><svg><use href="#gallery"/></svg><svg class="sel"><use href="#nav"/></svg>
    </aside>
  </main>

  <footer class="foot">
    <div class="bars">
      <div class="lines">
      <div class="bar b3">
        <i class="grip"></i>
        <div class="g0" style="width:136px"><svg><use href="#rabove"/></svg><svg><use href="#rbelow"/></svg><svg><use href="#cbefore"/></svg><svg><use href="#cafter"/></svg></div>
        <div class="gr" style="width:107px"><svg><use href="#delr"/></svg><svg><use href="#delc"/></svg><svg><use href="#delt"/></svg></div>
        <div class="gr" style="width:74px"><svg><use href="#selc"/></svg><svg><use href="#selt"/></svg></div>
        <div class="gr" style="width:108px"><svg class="dis"><use href="#merge"/></svg><svg><use href="#split"/></svg><svg><use href="#splitt"/></svg></div>
        <div class="gr" style="width:51px"><svg class="dis"><use href="#prot"/></svg><i class="dd off"></i></div>
        <div class="gr" style="width:107px"><svg class="on"><use href="#vtop"/></svg><svg><use href="#vmid"/></svg><svg><use href="#vbot"/></svg></div>
        <div class="gr" style="width:85px"><svg><use href="#fill"/></svg><i class="dd"></i><svg><use href="#autof"/></svg></div>
        <div class="gr" style="width:140px"><svg><use href="#bord"/></svg><i class="dd"></i><svg><use href="#bsty"/></svg><i class="dd"></i><svg><use href="#bcol"/></svg><i class="dd"></i></div>
        <div class="gr" style="width:140px"><svg><use href="#cur"/></svg><svg><use href="#pct"/></svg><svg><use href="#dec"/></svg><svg><use href="#at"/></svg></div>
        <div class="gr" style="width:74px"><svg><use href="#img2"/></svg><svg class="dis"><use href="#sort"/></svg></div>
        <div class="gr" style="width:74px"><svg><use href="#lock"/></svg><svg class="dis"><use href="#unlock"/></svg></div>
        <div class="gr" style="width:74px"><svg><use href="#sigma"/></svg><svg><use href="#fx"/></svg></div>
        <div class="gr"><svg><use href="#tprop"/></svg></div>
      </div>
      <div class="bar b4">
        <i class="grip"></i>
        <div class="g0" style="width:485px"><svg class="cf"><use href="#closef"/></svg><div class="combo find" style="width:250px"><span>Find</span><b><svg><use href="#chev"/></svg></b></div><svg class="dim"><use href="#up"/></svg><svg class="dim"><use href="#down"/></svg><span class="fa">Find All</span><span class="cb"></span><span class="mc"><u>M</u>atch Case</span></div>
        <div class="gr" style="width:41px"><svg><use href="#find"/></svg></div>
        <div class="gr" style="width:224px"><div class="combo pgc" style="width:150px"><svg><use href="#pg"/></svg><span>Page</span><b><svg><use href="#chev"/></svg></b></div><svg class="mid"><use href="#up"/></svg><svg class="mid"><use href="#down"/></svg></div>
        <div class="gr"></div>
      </div>
      </div>
      <div class="act"><p>Activate Windows</p><p>Go to Settings to activate Windows.</p></div>
    </div>
    <div class="status">
      <span style="width:260px" class="s1">Page 2 of 5</span><span style="width:382px">423 words, 2,010 characters</span><span style="width:270px">Default Style</span><span style="width:308px" class="c">English (USA)</span><span style="width:69px"></span>
      <span style="width:30px" class="ic i1"><svg width="18" height="14" viewBox="0 0 18 14"><path d="M1 4.500h8v5H1zM11 1.500h5M11 12.500h5M13.500 2v10" fill="none" stroke="#666" stroke-width="1.300"/></svg></span>
      <span style="width:31px" class="ic i1"><svg width="12" height="12" viewBox="0 0 12 12"><path d="M1 1h8l2 2v8H1zM3.500 1v3h5V1M3 11V7h6v4" fill="none" stroke="#e0788f" stroke-width="1.200"/></svg></span>
      <span style="width:30px"></span><span style="width:270px" class="c t2">Table2:H10</span>
      <span style="width:78px" class="ic i1"><svg width="58" height="14" viewBox="0 0 58 14"><path d="M2 2h5l2.500 3v7H2z" fill="#fff" stroke="#4a82bd" stroke-width="1.300"/><path d="M16 2h4l2.500 3v7H16zM26 2h4l2.500 3v7H26zM41 12V5l2-3h5v10zM55 12V5l-2-3h-5v10z" fill="#fff" stroke="#797979" stroke-width="1.200"/></svg></span>
      <span style="width:143px" class="ic"><svg width="128" height="14" viewBox="0 0 128 14"><path d="M1 7h9M118 7h9M122.500 2.500v9" stroke="#555" stroke-width="2"/><path d="M16 7.500h97M47 4.500v5" stroke="#797979" stroke-width="1.400"/><path d="M63 2h4v10h-4z" fill="#666"/></svg></span>
      <span class="zm">110%</span>
    </div>
    <div class="task">
      <div class="start"><svg width="17" height="17" viewBox="0 0 17 17"><path d="M0 2.300l7.500-1V8H0zM8.500 1.200L17 0v8H8.500zM0 9h7.500v6.800l-7.500-1zM8.500 9H17v8l-8.500-1.200z" fill="#fff"/></svg></div>
      <div class="search"><svg width="18" height="18" viewBox="0 0 18 18"><circle cx="11" cy="6.500" r="5.500" fill="none" stroke="#eee" stroke-width="1.300"/><path d="M7 10.500L1 17" stroke="#eee" stroke-width="1.400"/></svg><span>Type here to search</span></div>
      <div class="apps">
        <div><svg viewBox="0 0 24 24"><path d="M5 7.500h9v9H5zM18.500 4v3M18.500 12v9M4.500 3v2.500h10V3M4.500 21v-2.500h10V21" fill="none" stroke="#eee" stroke-width="1.300"/><path d="M17 8h3v3h-3z" fill="#eee"/></svg></div>
        <div><svg viewBox="0 0 24 24"><path d="M0 8l12-8 12 8v15H0z" fill="#0b66b5"/><path d="M2 7h20v8H2z" fill="#fff"/><path d="M0 8l12 8L0 23z" fill="#1b93de"/><path d="M24 8L12 16l12 7z" fill="#28a8ea"/><path d="M0 23l12-8 12 8z" fill="#36b6f2"/></svg></div>
        <div><svg viewBox="0 0 24 24"><defs><linearGradient id="eg" x1="0" x2="1"><stop offset="0" stop-color="#2aa8e0"/><stop offset="1" stop-color="#5fd35a"/></linearGradient></defs><circle cx="12" cy="12" r="12" fill="#1474c4"/><path d="M24 13v5l-7 2-4-7z" fill="#101010"/><path d="M0 12C0 5 5 0 12 0s12 5 12 10.500c0 4-3 6-6 6s-5-1-4-3c1-4-2-6-5-6S1 9 0 12z" fill="url(#eg)"/><path d="M9 9c-3 3-2 9 4 11 3 1 7 0 9-2-5 8-16 8-18 1-1-4 1-8 5-10z" fill="#0d4f9e"/></svg></div>
        <div><svg viewBox="0 0 24 24"><path d="M1 3h8l2 2h12v16H1z" fill="#e5a823"/><path d="M1 7h22v14H1z" fill="#fcd462"/><path d="M5 13h14v9h-3v-4H8v4H5z" fill="#2f8be0"/></svg></div>
        <div><svg viewBox="0 0 24 24"><defs><linearGradient id="ff" x1="1" x2="0" y1="0" y2="1"><stop offset="0" stop-color="#ffe04a"/><stop offset=".5" stop-color="#ff8a1e"/><stop offset="1" stop-color="#ee2458"/></linearGradient></defs><path d="M2 5c1 1 2 1 3 1 2-1 4-1 6 0 0-2 1-4 3-6 1 3 8 5 9 12 0 7-5 12-11 12S1 19 1 13c0-3 0-5 1-8z" fill="url(#ff)"/><circle cx="12.500" cy="13" r="5" fill="#6d45c9"/><path d="M4 10c4-2 7 0 9 1-2 3-4 2-5 3 2 4 8 4 10 0-1 8-13 8-14-4z" fill="#ff8a1e"/></svg></div>
        <div><svg viewBox="0 0 24 24"><circle cx="12" cy="12" r="9.500" fill="#12a5e6"/><circle cx="7" cy="7" r="5.500" fill="#12a5e6"/><circle cx="17" cy="17" r="5.500" fill="#0c8bd6"/><text x="7.500" y="17.500" class="gb" font-size="15" fill="#fff">S</text></svg></div>
        <div class="cur"><svg viewBox="0 0 24 24"><path d="M2 0h13l7 7v17H2z" fill="#fff"/><path d="M2 0h13l7 7h-4l-7-5H4v22H2zM15 0h7v7z" fill="#1583c4"/><path d="M5 10h5M5 13h5M5 16h14M5 19h9M12 11h7v3h-7" stroke="#1583c4" stroke-width="1.600" fill="none"/></svg></div>
        <div><svg viewBox="0 0 24 24"><path d="M0 3l10-3 2 12-6 12-5-4z" fill="#e9316b"/><path d="M11 2l9-1 4 8-2 11-9 4-6-3z" fill="#2f76e8"/><path d="M3 1h9L6 20H2z" fill="#b13fc4"/><path d="M4 4h15v16H4z" fill="#0b0b0b"/><text x="6" y="12" class="gb" font-size="8.500" fill="#fff">IJ</text><path d="M6 17h6" stroke="#fff" stroke-width="1.400"/></svg></div>
        <div><svg viewBox="0 0 24 24"><path d="M12 0l5.500 5.500-5.500 5.500-5.500-5.500z" fill="#f0694c"/><path d="M6 6l5.500 6L6 18l-6-6z" fill="#7fa9ee"/><path d="M18 6l6 6-6 6-6-6z" fill="#6bbf4b"/><path d="M12 13l5.500 5.500L12 24l-5.500-5.500z" fill="#f7d75b"/><path d="M12 5v13M12 9l5 4" stroke="#222" stroke-width="1.600"/><circle cx="12" cy="18" r="1.800" fill="#222"/><circle cx="17" cy="13" r="1.800" fill="#222"/></svg></div>
        <div><svg viewBox="0 0 24 24"><path d="M8 2l12 1-4 18-14-2z" fill="#8cc7d6"/><path d="M8 2l12 1-3 10C9 15 8 8 4 13z" fill="#b9e2ea"/><path d="M20 3l3 18-6 1z" fill="#e9e6df"/><path d="M2 19l14 2 1 1-14-1z" fill="#4b6a80"/></svg></div>
      </div>
      <div class="tray">
        <svg width="14" height="14" viewBox="0 0 14 14"><path d="M1.500 10L7 4.500l5.500 5.500" fill="none" stroke="#eee" stroke-width="1.500"/></svg>
        <svg width="17" height="14" viewBox="0 0 17 14"><path d="M4 12a3.500 3.500 0 0 1-1-6 5 5 0 0 1 9-2 4 4 0 0 1 2 8z" fill="#eee"/><path d="M3 6a5 5 0 0 1 9-2L7 8z" fill="#b5b5b5"/></svg>
        <svg width="15" height="15" viewBox="0 0 15 15"><path d="M2 14C2 7 7 2 14 2M5 14c0-5 4-9 9-9M8 14c0-3 3-6 6-6" fill="none" stroke="#ccc" stroke-width="1.200"/><path d="M11 14a3 3 0 0 1 3-3v3z" fill="#fff"/></svg>
        <svg width="17" height="14" viewBox="0 0 17 14"><path d="M7 3.500h9v8H7M5.500 6v6H8" fill="none" stroke="#eee" stroke-width="1.300"/><path d="M1 3h6v3H5v2H3V6H1zM2 1h1v2H2zM5 1h1v2H5z" fill="#eee"/><path d="M9 6h5v3H9z" fill="#eee"/></svg>
        <svg width="17" height="14" viewBox="0 0 17 14"><path d="M1 5h2.500L7 2v10L3.500 9H1zM9.500 5q1.500 2 0 4M12 3q3 4 0 8M14.500 1.500q3.500 5.500 0 11" fill="none" stroke="#eee" stroke-width="1.200"/></svg>
        <svg width="16" height="14" viewBox="0 0 16 14"><path d="M4.500 0L8 2.300 4.500 4.600 1 2.300zM11.500 0L15 2.300l-3.500 2.300L8 2.300zM4.500 4.800L8 7.100 4.500 9.400 1 7.100zM11.500 4.800L15 7.100l-3.500 2.300L8 7.100zM8 8.800l3.500 2.300L8 13.500l-3.500-2.400z" fill="#a8a8a8"/></svg>
        <span class="lang">МКД</span>
        <span class="clock">12:15 AM<br>5/27/2021</span>
        <svg class="note" width="17" height="17" viewBox="0 0 17 17"><path d="M1 1h14v11h-7l-3 3v-3H1z" fill="#fff"/><path d="M3 4.500h10M3 7h10M3 9.500h6" stroke="#111"/><circle cx="13" cy="12.500" r="4" fill="#111"/><path d="M11 14.500a3.200 3.200 0 1 0 3-5c1 2-1 4.500-3 5z" fill="#fff"/></svg>
      </div>
    </div>
  </footer>
</div>
</body>
</html>
```
FILE: styles.css
```css
* { box-sizing: border-box; }
body { margin: 0; font: 12px/16px "Open Sans", "Noto Sans", sans-serif; letter-spacing: -0.38px; color: #000; overflow: hidden; }
.defs { display: none; }
.g { font-family: "Open Sans", sans-serif; }
.gb { font-family: "Open Sans", sans-serif; font-weight: 600; letter-spacing: 0; }
.gs { font-family: "Liberation Serif", serif; font-weight: bold; }
.gsi { font-family: "Open Sans", sans-serif; font-style: italic; font-weight: 600; }
u { text-underline-offset: 2px; }

.screen { width: 1920px; height: 1080px; border: 3px solid #da1021; display: flex; flex-direction: column; background: #f0f0f0; }
.head { height: 124px; background: linear-gradient(#fff 0, #fdfdfd 45%, #f8f8f8 75%, #efefef 100%); }
.title { height: 19px; display: flex; align-items: center; padding-bottom: 2px; }
.title .app { width: 12px; height: 16px; margin: 0 7px 0 1px; }
.title span { flex: 1; letter-spacing: -0.32px; }
.title .win { width: 120px; height: 16px; margin-right: 7px; }
.menu { height: 29px; display: flex; align-items: center; padding-left: 5px; }
.menu .gl { width: 18px; height: 18px; margin-left: auto; }
.menu .mx { width: 10px; height: 10px; margin: 0 4px 0 7px; }

.bar { display: flex; align-items: stretch; }
.b1 { height: 37px; padding-bottom: 1px; }
.b2 { height: 39px; }
.b3 { height: 36px; }
.b4 { height: 41px; }
.grip { width: 8px; margin: 6px 0; background: repeating-linear-gradient(#aaa 0 2px, transparent 2px 4px) no-repeat 0 0 / 2px 100%; }
.g0, .gr { display: flex; align-items: center; flex: none; }
.gr { padding-left: 4px; background: linear-gradient(#c3c3c3, #c3c3c3) no-repeat 0 50% / 1px 18px; }
.g0 > svg, .gr > svg { width: 33px; height: 34px; padding: 5px 5px 5px 4px; flex: none; overflow: visible; }
.dd { width: 11px; height: 34px; flex: none; background: #000; clip-path: polygon(1px 14px, 9px 14px, 9px 15px, 6px 19px, 4px 19px, 1px 15px); }
.dd.off { background: #999; }
.gr > .on { background: #c5dff5; outline: 1px solid #90c8f6; outline-offset: -1px; }
.gr > .dis { background: #f8f8f8; }

.combo { height: 24px; border: 1px solid #a5a6ad; background: #fff; display: flex; align-items: center; padding: 1px; flex: none; }
.combo span { flex: 1; padding: 1px 0 0 3px; white-space: nowrap; }
.combo b { width: 17px; height: 20px; border: 1px solid #a3a3a3; background: #e1e1e1; display: flex; align-items: center; justify-content: center; }
.combo b svg { width: 10px; height: 10px; }
.c3 { margin-left: 8px; }
.n1 { margin-left: 1px; }
.cf { margin-left: 1px; }
.find { color: #777; }
.pgc { border-color: #7c7c86; }
.pgc > svg { width: 20px; height: 20px; color: #888; }
.dim { color: #c0c0c0; }
.mid { color: #888; }
.fa { color: #777; margin-left: 3px; width: 48px; }
.cb { width: 13px; height: 13px; border: 1.500px solid #222; background: #fff; margin-right: 4px; }

.work { height: 813px; border-top: 1px solid #a9a9a9; display: grid; grid-template-columns: 1853px 17px 7px 37px; }
.doc { background: #dfdfde; overflow: hidden; }
.rrow { height: 25px; padding: 4px 0 5px 5px; display: flex; }
.tab { width: 7px; height: 7px; margin: 5px 464px 0 0; }
.ruler { width: 900px; height: 16px; }
.rn { font-size: 10px; fill: #666; text-anchor: middle; letter-spacing: 0; }
.pages { height: 787px; overflow: hidden; }
.page { width: 901px; margin-left: 474px; background: #fff; border: 1px solid #b8b8b8; box-shadow: inset 1px 0 #eee, 0 1px 6px rgba(0, 0, 0, .28); }
.p1 { height: 57px; border-top: 0; margin-bottom: 17px; }
.p2 { height: 760px; padding: 84px 0 0 84px; position: relative; }
.crop { position: absolute; left: 70px; top: 70px; width: 760px; height: 15px; background: linear-gradient(#c4c4c4, #c4c4c4) 14px 0 / 1px 14px, linear-gradient(#c4c4c4, #c4c4c4) 745px 0 / 1px 14px, linear-gradient(#c4c4c4, #c4c4c4) 0 14px / 760px 1px; background-repeat: no-repeat; }
table { position: relative; width: 732px; table-layout: fixed; border-collapse: separate; border-spacing: 0; background: linear-gradient(#000, #000) no-repeat 100% 0 / 1px 100%; }
th, td { text-align: left; vertical-align: top; line-height: 16px; background: linear-gradient(#000, #000) 0 0 / 1px 100%, linear-gradient(#808080, #808080) 0 0 / 100% 2px; background-repeat: no-repeat; }
td:last-child { border-right: 1px solid #000; }
th { font-weight: 400; font-size: 12.600px; letter-spacing: -0.05px; color: #333; padding: 7px 0 0 5px; }
td { font: 14px/16px "Liberation Serif", serif; padding: 5px 0 0 5px; }
.last th, .last td { background: linear-gradient(#000, #000) 0 0 / 1px 100%, linear-gradient(#808080, #808080) 0 0 / 100% 2px, linear-gradient(#808080, #808080) 0 100% / 100% 2px; background-repeat: no-repeat; }
.last th { padding-top: 5px; color: #000; letter-spacing: -0.4px; }
.wave { width: 10px; height: 4px; vertical-align: -5px; }

.scroll { background: #f0f0f0; border-left: 1px solid #fff; display: flex; flex-direction: column; align-items: center; padding: 5px 1px 5px 0; }
.scroll svg { width: 10px; height: 8px; flex: none; }
.thumb { width: 15px; height: 103px; background: #cdcdcd; margin: 307px 0 auto; }
.split { height: 810px; border: 1px solid #9f9f9f; background: #f0f0f0; box-shadow: inset 1px 0 #fff; }
.hide { width: 7px; height: 73px; margin: 368px 0 0 -1px; background: #686866; display: flex; align-items: center; }
.hide::after { content: ""; border: 4px solid transparent; border-left: 5px solid #eee; border-right: 0; }
.side { height: 810px; border: solid #9f9f9f; border-width: 1px 0; background: #f0f0f0; box-shadow: inset 1px 0 #fff; display: flex; flex-direction: column; align-items: center; }
.side svg { width: 32px; height: 32px; margin: 0 0 3px 3px; padding: 3px; border: 1px solid transparent; flex: none; }
.side .pgi { color: #797979; }
.side .dots { width: 24px; height: 24px; padding: 0; margin: 7px 0 6px 3px; }
.side hr { width: 23px; height: 1px; border: 0; background: #dcdcdc; margin: 1px 0 3px 3px; }
.side .sel { border: 1px solid #ababab; border-radius: 3px; }

.foot { height: 137px; }
.bars { height: 78px; border-top: 1px solid #a0a0a0; background: #f0f0f0; display: flex; }
.lines { width: 1596px; }
.act { color: #b9b9b9; padding-top: 6px; white-space: nowrap; }
.act p { margin: 0; font-size: 14.200px; line-height: 20px; letter-spacing: 0.1px; }
.act p:first-child { font-size: 19.300px; line-height: 24px; letter-spacing: -0.1px; }
.status { height: 22px; border-top: 1px solid #a0a0a0; display: flex; align-items: center; letter-spacing: -0.48px; padding-top: 1px; }
.status span { height: 16px; line-height: 16px; flex: none; padding-left: 10px; background: linear-gradient(#a8a8a8, #a8a8a8) no-repeat 0 0 / 1px 16px; white-space: nowrap; }
.status .s1 { background: none; padding-left: 8px; }
.status .c { text-align: center; padding: 0 0 0 1px; }
.status .t2 { padding-left: 4px; }
.status .ic { padding: 0; display: flex; align-items: center; justify-content: center; }
.status .i1 { padding-left: 2px; }
.status .zm { padding-left: 9px; }

.task { height: 37px; background: #101010; display: flex; color: #eee; }
.start { width: 45px; display: flex; align-items: center; justify-content: center; padding: 3px 3px 0 0; }
.search { width: 344px; background: #414141; border: 1px solid #5c5c5c; border-bottom: 0; display: flex; align-items: center; padding: 3px 0 0 11px; font-size: 14.500px; color: #ddd; }
.search span { margin-left: 10px; letter-spacing: -0.35px; }
.apps { display: flex; }
.apps div { width: 49.100px; display: flex; align-items: center; justify-content: center; padding: 2px 0 0 1px; }
.apps .cur { background: #333; }
.apps svg { width: 24px; height: 24px; }
.tray { margin-left: auto; width: 294px; display: flex; align-items: center; padding: 2px 0 0 5px; border-right: 1px solid #444; white-space: nowrap; }
.tray > svg { flex: none; margin-right: 8px; }
.lang { width: 30px; margin-left: 0; font-size: 12.500px; }
.clock { width: 62px; text-align: center; line-height: 17.500px; margin-left: 1px; }
.tray .note { margin: 0 0 0 12px; }
```
